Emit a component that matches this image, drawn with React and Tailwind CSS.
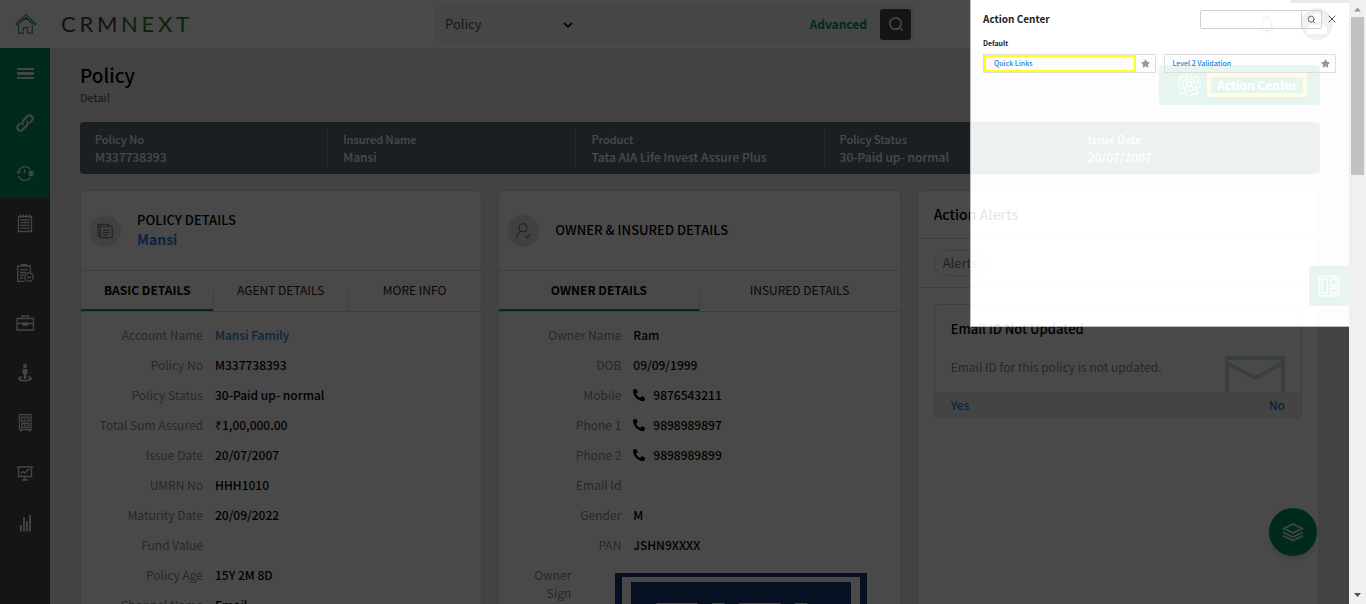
import React from "react";
import { X, Search } from "lucide-react";
import { FaPhone, FaStar } from "react-icons/fa";

const summary = [
  ["Policy No", "M337738393"],
  ["Insured Name", "Mansi"],
  ["Product", "Tata AIA Life Invest Assure Plus"],
  ["Policy Status", "30-Paid up- normal"],
  ["Issue Date", "20/07/2007"],
];

const policyRows = [
  ["Account Name", "Mansi Family", "link"],
  ["Policy No", "M337738393"],
  ["Policy Status", "30-Paid up- normal"],
  ["Total Sum Assured", "₹1,00,000.00"],
  ["Issue Date", "20/07/2007"],
  ["UMRN No", "HHH1010"],
  ["Maturity Date", "20/09/2022"],
  ["Fund Value", ""],
  ["Policy Age", "15Y 2M 8D"],
  ["Channel Name", "Email"],
];

const ownerRows = [
  ["Owner Name", "Ram"],
  ["DOB", "09/09/1999"],
  ["Mobile", "9876543211", "phone"],
  ["Phone 1", "9898989897", "phone"],
  ["Phone 2", "9898989899", "phone"],
  ["Email Id", ""],
  ["Gender", "M"],
  ["PAN", "JSHN9XXXX"],
];

function Glyph({ children, className = "size-5" }) {
  return (
    <svg viewBox="0 0 20 20" className={className} fill="none" stroke="currentColor" strokeWidth="1.3" aria-hidden="true">
      {children}
    </svg>
  );
}

const navTop = [
  [
    "Menu",
    <g key="p" fill="currentColor" stroke="none">
      <path d="M2 5h17v2H2zM2 9h17v3H2zM2 14h17v2H2z" />
    </g>,
  ],
  [
    "Links",
    <g key="p" strokeWidth="2">
      <path d="M8.300 12a3.200 3.200 0 0 1 .2-4.700l4-4a3 3 0 0 1 4.300 4.300l-2.300 2.300" />
      <path d="M11.700 8a3.200 3.200 0 0 1-.2 4.700l-4 4a3 3 0 0 1-4.300-4.300l2.300-2.300" />
    </g>,
  ],
  [
    "Recent",
    <g key="p">
      <path d="M3.500 9a6.500 6.500 0 0 1 11.800-2.500M3.700 13a6.500 6.500 0 0 0 11.600 1.500M9.500 6v4.500" />
      <path d="M1.700 8.500 3.500 10.300 5.300 8.500" />
      <path d="M14.500 8.500h2.500v4h-2.500zM17 9.500h1.700M17 11.500h1.700" fill="currentColor" />
    </g>,
  ],
];

const navRest = [
  [
    "Notes",
    <g key="p">
      <path d="M3.500 3.500h13v15h-13zM5.500 7h9M5.500 9.700h9M5.500 12.400h9M5.500 15.200h9" />
      <path d="M5.500 1.500v3M8.500 1.500v3M11.500 1.500v3M14.500 1.500v3" />
    </g>,
  ],
  [
    "Tasks",
    <g key="p">
      <path d="M10 18.300H2.700V3h12.600v7M6.500 3V1.700h5V3M5 6.700h8M5 9.500h6M5 12.200h4M5 15h3" />
      <circle cx="14" cy="14" r="4.200" />
      <path d="m12 13.200 1.800 1.800 2-1.800" />
    </g>,
  ],
  [
    "Cases",
    <g key="p">
      <path d="M2 5.500h16.500v11.500H2zM7 5.500v-2.500h6.500v2.500M2 10.500h6M12.500 10.500h6" />
      <path d="M8 10h4.500v2H8z" fill="currentColor" />
    </g>,
  ],
  [
    "People",
    <g key="p" fill="currentColor" stroke="none">
      <circle cx="10" cy="3" r="2" />
      <path d="M7.500 6h5v5h-1.300v5H8.800v-5H7.500z" />
      <path d="M7 13c-2.500.500-4 1.300-4 2.500 0 1.700 3 3 7 3s7-1.300 7-3c0-1.200-1.500-2-4-2.500v1.500c1 .300 1.700.700 1.700 1 0 .700-2 1.400-4.700 1.400s-4.700-.700-4.700-1.400c0-.300.700-.700 1.700-1z" />
    </g>,
  ],
  [
    "Records",
    <g key="p">
      <path d="M4.500 1.700h11.500v15H4.500zM6.800 4.200h7v4h-7zM6.800 10.500h7v4h-7zM6 16.700v2M14.500 16.700v2" />
      <path d="M9 6.200h2.600M9 12.500h2.600" />
    </g>,
  ],
  [
    "Reports",
    <path key="p" d="M2 4h16M3.500 4v9.500h13V4M5.500 10.500l2.500-2 2 1.500 2.500-3 2.500-.500M7 17h6M10 13.500V17" />,
  ],
  [
    "Analytics",
    <path key="p" strokeWidth="1.800" d="M6 12v6.500M9 4v14.500M12 8v10.500M15 2v16.500" />,
  ],
];

function NavItem({ label, children }) {
  return (
    <li>
      <button type="button" aria-label={label} className="flex h-[50px] w-full items-center justify-center text-[#f0f0f0]">
        <Glyph>{children}</Glyph>
      </button>
    </li>
  );
}

function Header() {
  return (
    <header className="flex h-12 shrink-0 items-center bg-white pr-4">
      <a href="#home" aria-label="Home" className="flex w-[52px] justify-center text-[#2f8f6c]">
        <Glyph className="size-[22px]">
          <path strokeWidth="1" d="M.8 10 10 1.500 19.200 10l-1.200 1L10 3.800 2 11zM3.300 10.800v7.500h4.200v-5h4v5h4.200v-7.500M4.800 8.500 10 4.800l6 5" />
        </Glyph>
      </a>
      <a href="#crm" aria-label="CRMNEXT" className="ml-[9px] flex w-32 justify-between font-[Lato] text-[22px] leading-[30px] text-[#444]">
        <span>C</span><span>R</span><span>M</span>
        <span className="text-[#2e7d32]">N</span>
        <span className="text-[#2e7d32]">E</span>
        <span className="text-[#2e7d32]">X</span>
        <span className="text-[#2e7d32]">T</span>
      </a>
      <form className="mx-auto ml-[245px] flex h-9 w-[480px] items-center rounded bg-[#f3f3f3] pr-[3px]">
        <div className="relative h-full w-[146px] border-r border-[#f8f8f8]">
          <select aria-label="Search in" className="h-full w-full appearance-none bg-transparent pl-[11px] text-[13px] text-[#555]">
            <option>Policy</option>
          </select>
          <svg viewBox="0 0 10 6" className="pointer-events-none absolute right-[6px] top-4 h-[6px] w-[10px]" fill="none" stroke="#000" strokeWidth="1.700" aria-hidden="true">
            <path d="m1 .8 4 4 4-4" />
          </svg>
        </div>
        <input aria-label="Search text" className="h-full min-w-0 flex-1 bg-transparent px-3 text-[13px] outline-none" />
        <a href="#advanced" className="mr-[13px] text-xs font-bold text-[#009860]">Advanced</a>
        <button type="button" aria-label="Search" className="flex h-[31px] w-[31px] items-center justify-center rounded-[3px] bg-[#464b49] text-[#eee]">
          <svg viewBox="0 0 16 16" className="size-4" fill="none" stroke="currentColor" strokeWidth="1.700" aria-hidden="true">
            <circle cx="7.500" cy="7.500" r="5.700" />
            <path d="m11.500 11.500 3 3" />
          </svg>
        </button>
      </form>
      <button type="button" aria-label="Notifications" className="mr-[26px] text-[#00965e]">
        <svg viewBox="0 0 16 20" className="h-5 w-4" fill="none" stroke="currentColor" strokeWidth="1" aria-hidden="true">
          <path d="M1.500 16.500c1.800-1.500 2-3.500 2-7C3.500 5.500 5.500 3.500 8 3.500s4.500 2 4.500 6c0 3.500.2 5.500 2 7zM6.500 3.500a1.500 1.500 0 0 1 3 0M6.500 16.500a1.500 1.500 0 0 0 3 0" />
        </svg>
      </button>
      <button type="button" aria-label="Profile" className="rounded-full">
        <svg viewBox="0 0 32 32" className="size-8" aria-hidden="true">
          <circle cx="16" cy="16" r="16" fill="#6b6b6b" />
          <circle cx="16" cy="10" r="5" fill="#fff" />
          <path d="M6 26v-3c0-5 3-7 6-7 2 1.500 6 1.500 8 0 3 0 6 2 6 7v3z" fill="#fff" />
        </svg>
      </button>
    </header>
  );
}

function Tabs({ items }) {
  return (
    <div role="tablist" className="flex h-[41px] border-b border-[#d9d9d9]">
      {items.map((t, i) => (
        <div key={t} className="flex flex-1 items-end">
          <button
            type="button"
            role="tab"
            aria-selected={i === 0}
            className={
              i === 0
                ? "h-10 flex-1 border-b-2 border-[#009860] text-xs font-bold text-black"
                : "h-10 flex-1 border-b-2 border-transparent text-xs text-[#222]"
            }
          >
            {t}
          </button>
          {i < items.length - 1 && <span className="h-5 w-px bg-[#d9d9d9]" />}
        </div>
      ))}
    </div>
  );
}

function Row({ label, value, kind }) {
  return (
    <div className="flex h-[30px] items-center gap-3 text-xs leading-[18px]">
      <dt className="w-[122px] shrink-0 text-right text-[#8c8c8c]">{label}</dt>
      <dd className="flex items-center font-medium text-black">
        {kind === "phone" && <FaPhone className="mr-2 size-3 -scale-x-100" aria-hidden="true" />}
        {kind === "link" ? <a href="#account" className="text-[#1e83dc]">{value}</a> : value}
      </dd>
    </div>
  );
}

function CardHeader({ icon, children }) {
  return (
    <div className="flex h-20 items-center gap-4 border-b border-[#d9d9d9] pl-2">
      <span className="flex size-8 items-center justify-center rounded-full bg-[#e2e2e2] text-[#666]">{icon}</span>
      <div className="pb-[2px]">{children}</div>
    </div>
  );
}

const card = "rounded border border-[#dcdcdc] bg-white";

function PanelLink({ label, active }) {
  return (
    <li className="flex h-[19px] flex-1 border border-[#dedede]">
      <a
        href="#link"
        className={
          active
            ? "flex flex-1 items-center border-2 border-[#ffff1a] pl-2 text-[7px] font-medium text-[#1e83dc]"
            : "flex flex-1 items-center pl-2 text-[7px] font-medium text-[#1e83dc]"
        }
      >
        {label}
      </a>
      <button type="button" aria-label={"Favourite " + label} className="flex w-[19px] items-center justify-center text-[#999]">
        <FaStar className="size-[9px]" aria-hidden="true" />
      </button>
    </li>
  );
}

function ActionPanel() {
  return (
    <aside
      aria-label="Action Center"
      className="absolute right-0 top-0 z-40 h-[327px] w-[379px] border-b border-l border-[#bbb] bg-white/90 pl-3 pr-[11px] shadow-[0_0_0_3000px_rgba(0,0,0,0.714)]"
    >
      <span className="absolute right-0 top-0 h-[3px] w-[59px] bg-[#eaeaea]" />
      <div className="flex h-[38px] items-center">
        <h2 className="flex-1 pb-[2px] text-[10px] font-bold text-[#222]">Action Center</h2>
        <form className="flex h-[19px] rounded-[2px] border border-[#d0d0d0]">
          <input aria-label="Search actions" className="w-[101px] border-r border-[#d0d0d0] bg-transparent px-1 text-[8px] outline-none" />
          <button type="button" aria-label="Search" className="flex w-[19px] items-center justify-center text-[#444]">
            <Search className="size-[9px]" />
          </button>
        </form>
        <button type="button" aria-label="Close" className="ml-1 text-[#555]">
          <X className="size-3" />
        </button>
      </div>
      <h3 className="text-[7px] font-bold leading-[10px] text-[#222]">Default</h3>
      <ul className="mt-[6px] flex gap-2 pr-[2px]">
        <PanelLink label="Quick Links" active />
        <PanelLink label="Level 2 Validation" />
      </ul>
    </aside>
  );
}

export default function App() {
  return (
    <div className="flex h-screen overflow-hidden font-['Noto_Sans_CJK_SC',sans-serif]">
      <div className="relative flex min-w-0 flex-1 flex-col overflow-hidden bg-[#ebebeb]">
        <Header />
        <div className="flex min-h-0 flex-1">
          <nav aria-label="Main" className="w-[50px] shrink-0 bg-[#464e4b]">
            <ul className="bg-[#009860]">
              {navTop.map(([l, g]) => <NavItem key={l} label={l}>{g}</NavItem>)}
            </ul>
            <ul>
              {navRest.map(([l, g]) => <NavItem key={l} label={l}>{g}</NavItem>)}
            </ul>
          </nav>
          <main className="min-w-0 flex-1 overflow-hidden pl-[30px] pr-[29px]">
            <div className="flex h-[74px] items-start justify-between pt-4">
              <div>
                <h1 className="text-[19px] font-medium leading-[22px] text-black">Policy</h1>
                <p className="mt-[2px] text-[11px] leading-[18px] text-[#555]">Detail</p>
              </div>
              <button type="button" className="mt-px flex h-10 w-[161px] items-center rounded bg-[#009860] pl-[18px] text-white">
                <svg viewBox="0 0 24 24" className="mr-[6px] size-6" fill="none" stroke="currentColor" strokeWidth="1.200" aria-hidden="true">
                  <path d="M10 1h4l.7 2.700 2 .8L19 3.200 21.500 6l-1.300 2.200.8 2 2.300.7v3l-2.500.8-.8 2 1.200 2.300-2.700 2.700-2.200-1.200-2 .8L13.700 23h-3.400l-.8-2.500-2-.8-2.300 1.200L2.600 18.300l1.200-2.200-.8-2L.7 13.400v-3L3 9.800l.8-2L2.700 5.500 5.300 3.200l2.200 1.200 2-.7z" />
                  <circle cx="12" cy="12" r="6.500" />
                  <circle cx="12" cy="10.500" r="2.500" />
                  <path d="M7.500 16.500c.5-2.500 2-3.500 4.500-3.500s4 1 4.500 3.500" />
                </svg>
                <span className="flex h-6 items-center border-4 border-[#ffee00] px-[6px] text-xs font-bold">Action Center</span>
              </button>
            </div>

            <dl className="flex h-[52px] items-center rounded bg-[#5a6e79] text-xs font-medium leading-[18px] text-white">
              {summary.map(([k, v], i) => (
                <div
                  key={k}
                  className={
                    i < 4
                      ? "flex h-[38px] min-w-0 flex-1 flex-col justify-center border-r border-[#7b8d96] pl-[15px]"
                      : "flex h-[38px] min-w-0 flex-1 flex-col justify-center pl-[15px]"
                  }
                >
                  <dt className="text-[11px] leading-[18px]">{k}</dt>
                  <dd>{v}</dd>
                </div>
              ))}
            </dl>

            <div className="mr-px mt-4 grid h-[600px] grid-cols-3 gap-4">
              <section className={card}>
                <CardHeader
                  icon={
                    <Glyph className="size-4">
                      <path d="M4 16.500H1.500v-15h13V4M4 4h15v14.500H4zM7.500 9h8M7.500 12h8M7.500 15h6" />
                    </Glyph>
                  }
                >
                  <h2 className="text-[13px] font-medium leading-[18px] text-black">POLICY DETAILS</h2>
                  <a href="#mansi" className="block text-sm font-bold leading-5 text-[#1e83dc]">Mansi</a>
                </CardHeader>
                <Tabs items={["BASIC DETAILS", "AGENT DETAILS", "MORE INFO"]} />
                <dl className="pt-2">
                  {policyRows.map(([l, v, k]) => <Row key={l} label={l} value={v} kind={k} />)}
                </dl>
              </section>

              <section className={card}>
                <CardHeader
                  icon={
                    <Glyph className="size-4">
                      <circle cx="10" cy="6" r="5" />
                      <path d="M7 10.500C3.500 12 2 15 2 19M13 10.500l1 1M12.500 16l2.500 2.500 4.500-4.500" />
                    </Glyph>
                  }
                >
                  <h2 className="text-[13px] font-medium leading-[18px] text-black">OWNER &amp; INSURED DETAILS</h2>
                </CardHeader>
                <Tabs items={["OWNER DETAILS", "INSURED DETAILS"]} />
                <dl className="pt-2">
                  {ownerRows.map(([l, v, k]) => <Row key={l} label={l} value={v} kind={k} />)}
                  <div className="flex pt-[6px] text-xs leading-[18px]">
                    <dt className="w-[72px] pl-5 text-right text-[#8c8c8c]">Owner Sign</dt>
                    <dd className="ml-11 mt-[7px]">
                      <svg viewBox="0 0 252 150" className="h-[150px] w-[252px]" role="img" aria-label="Signature image">
                        <rect width="252" height="150" fill="#13387a" />
                        <rect x="7" y="4" width="238" height="142" fill="#fff" />
                        <rect x="16" y="9" width="220" height="132" fill="#13387a" />
                        <text x="126" y="79" textAnchor="middle" fontFamily="Liberation Sans, sans-serif" fontWeight="700" fontSize="70" fill="#fff">TATA</text>
                      </svg>
                    </dd>
                  </div>
                </dl>
              </section>

              <section className={card}>
                <h2 className="flex h-12 items-center border-b border-[#d9d9d9] pb-[2px] pl-4 text-sm font-medium text-black">Action Alerts</h2>
                <div className="flex h-[49px] items-center border-b border-[#d9d9d9] pl-4">
                  <button type="button" className="h-[26px] rounded-full border border-[#dcdcdc] px-2 text-[13px] leading-[18px] text-[#777]">Alerts</button>
                </div>
                <article className="mx-4 mt-4 rounded border border-[#d9d9d9]">
                  <div className="flex h-[87px] items-end justify-between px-4">
                    <div className="self-start pt-[15px]">
                      <h3 className="text-[13px] font-medium leading-[18px] text-black">Email ID Not Updated</h3>
                      <p className="mt-5 text-xs leading-[18px] text-[#8c8c8c]">Email ID for this policy is not updated.</p>
                    </div>
                    <svg viewBox="0 0 60 36" className="h-9 w-[60px] shrink-0" fill="none" stroke="#bfded4" strokeWidth="4" aria-hidden="true">
                      <path d="M2 36V2h56v34M2 7l28 15L58 7" />
                    </svg>
                  </div>
                  <div className="flex h-[25px] items-center justify-between bg-[#ececec] px-4 text-xs font-medium text-[#1e83dc]">
                    <a href="#yes">Yes</a>
                    <a href="#no">No</a>
                  </div>
                </article>
              </section>
            </div>
          </main>
        </div>

        <button type="button" aria-label="Layout" className="absolute right-0 top-[266px] flex size-10 items-center justify-center rounded-l bg-[#009860] text-white">
          <Glyph className="size-[22px]">
            <path d="M1 1h18v18H1zM3.500 3.500h5v13h-5zM11.500 3.500h5v6h-5zM11.500 12h5v4.500h-5z" />
          </Glyph>
        </button>
        <button type="button" aria-label="Layers" className="absolute bottom-12 right-8 flex size-12 items-center justify-center rounded-full bg-[#009860] text-[#e8e8e8] shadow-md">
          <svg viewBox="0 0 22 20" className="h-5 w-[22px]" fill="none" stroke="currentColor" strokeWidth="1.800" aria-hidden="true">
            <path d="M11 2 20 6.500 11 11 2 6.500zM1 10.300l10 4.700 10-4.700M1 13.800l10 4.700 10-4.700" />
          </svg>
        </button>

        <ActionPanel />
      </div>

      <div aria-hidden="true" className="flex w-[17px] shrink-0 flex-col items-center bg-[#f0f0f0]">
        <svg viewBox="0 0 17 17" className="size-[17px]"><path d="M5 11.500 8.500 7.500l3.500 4z" fill="#999" /></svg>
        <span className="h-[158px] w-[13px] bg-[#c1c1c1]" />
        <span className="flex-1" />
        <svg viewBox="0 0 17 17" className="size-[17px]"><path d="M5 6 8.500 10 12 6z" fill="#505050" /></svg>
      </div>
    </div>
  );
}
